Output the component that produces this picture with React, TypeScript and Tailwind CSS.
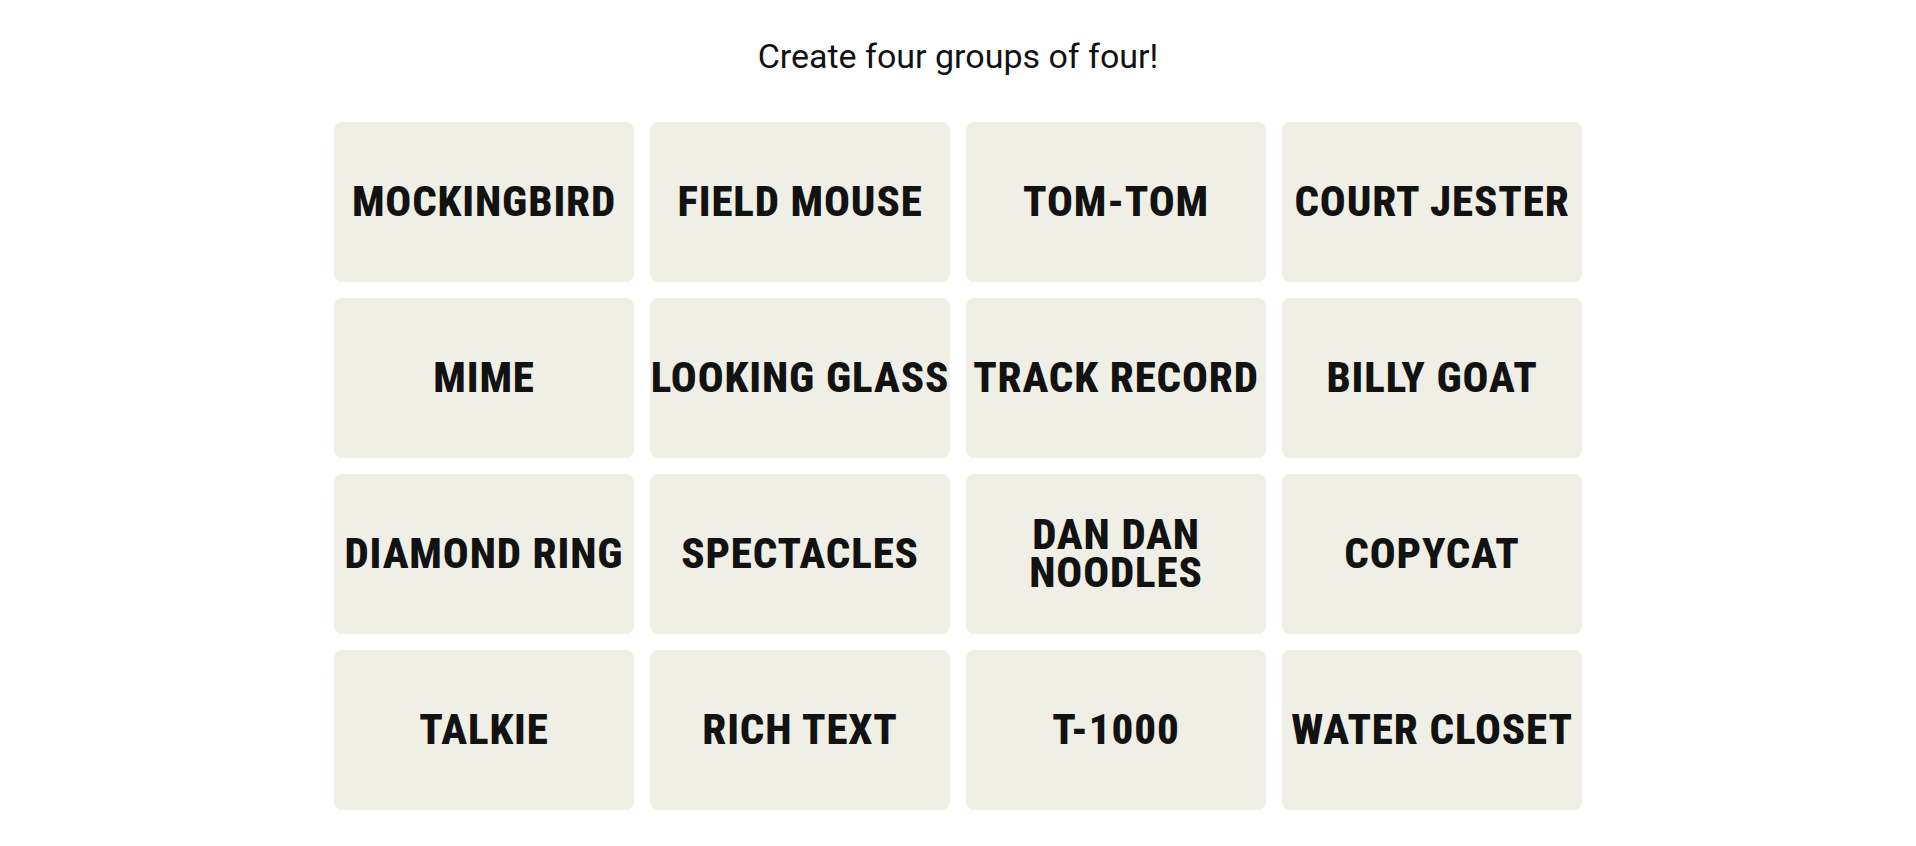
const words = [
  'MOCKINGBIRD',
  'FIELD MOUSE',
  'TOM-TOM',
  'COURT JESTER',
  'MIME',
  'LOOKING GLASS',
  'TRACK RECORD',
  'BILLY GOAT',
  'DIAMOND RING',
  'SPECTACLES',
  'DAN DAN NOODLES',
  'COPYCAT',
  'TALKIE',
  'RICH TEXT',
  'T-1000',
  'WATER CLOSET',
];

function Tile({ word }: { word: string }) {
  return (
    <button className="h-[160px] rounded-lg bg-[#efefe6] flex items-center justify-center px-1 pb-[2px] text-center">
      <span className="whitespace-nowrap font-['Roboto',sans-serif] font-extrabold font-stretch-semi-condensed text-[43px] leading-[38px] tracking-[0.02em] uppercase text-[#121212]">
        {word === 'DAN DAN NOODLES' ? (
          <>
            DAN DAN
            <br />
            NOODLES
          </>
        ) : (
          word
        )}
      </span>
    </button>
  );
}

export default function App() {
  return (
    <div className="min-h-screen bg-white pt-[39px]">
      <h2 className="text-center font-['Roboto',sans-serif] text-[34px] leading-[35px] text-[#121212]">
        Create four groups of four!
      </h2>
      <div className="mx-auto mt-12 grid w-[1248px] grid-cols-4 gap-4">
        {words.map((w) => (
          <Tile key={w} word={w} />
        ))}
      </div>
    </div>
  );
}
